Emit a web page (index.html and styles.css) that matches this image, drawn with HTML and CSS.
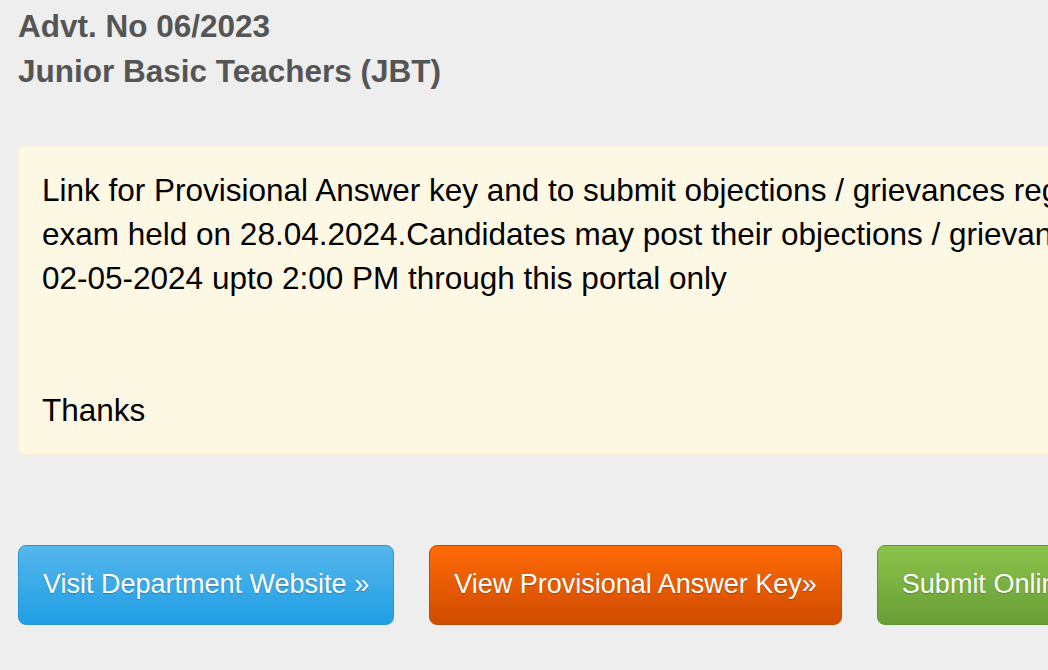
FILE: index.html
```html
<!DOCTYPE html>
<html lang="en">
<head>
<meta charset="utf-8">
<title>Advt. No 06/2023 - Junior Basic Teachers (JBT)</title>
<link rel="stylesheet" href="styles.css">
</head>
<body>
<div class="page">
  <div class="titles">
    <div class="title">Advt. No 06/2023</div>
    <div class="title">Junior Basic Teachers (JBT)</div>
  </div>
  <div class="notice">
    <p class="notice-text">Link for Provisional Answer key and to submit objections / grievances regarding the JBT<br>exam held on 28.04.2024.Candidates may post their objections / grievances till<br>02-05-2024 upto 2:00 PM through this portal only<br><br><br>Thanks</p>
  </div>
  <div class="actions">
    <a class="btn btn-blue" href="#">Visit Department Website &raquo;</a>
    <a class="btn btn-orange" href="#">View Provisional Answer Key&raquo;</a>
    <a class="btn btn-green" href="#">Submit Online Objections &raquo;</a>
  </div>
</div>
</body>
</html>
```

FILE: styles.css
```css
html, body {
  margin: 0;
  padding: 0;
}
body {
  background: #eeeeee;
  font-family: "Liberation Sans", Arial, sans-serif;
  overflow: hidden;
  width: 1048px;
  height: 670px;
}
.page {
  padding: 4px 0 0 18px;
}
.titles {
  margin-bottom: 51px;
}
.title {
  font-size: 31.5px;
  line-height: 45px;
  font-weight: bold;
  color: #555555;
  white-space: nowrap;
}
.notice {
  width: 1300px;
  box-sizing: border-box;
  background: #fcf8e3;
  border: 1px solid #faefd6;
  border-radius: 6px;
  padding: 22px 23px 22px 23px;
}
.notice-text {
  margin: 0;
  font-size: 31.5px;
  line-height: 44px;
  color: #000000;
  white-space: nowrap;
}
.actions {
  margin-top: 90px;
  display: flex;
  gap: 35px;
}
.btn {
  flex-shrink: 0;
  display: block;
  font-size: 27px;
  line-height: 36px;
  padding: 20px 24px 22px 24px;
  border: 1px solid transparent;
  border-radius: 8px;
  color: #ffffff;
  text-decoration: none;
  white-space: nowrap;
  text-shadow: 0 1px 1px rgba(0, 0, 0, 0.25);
}
.btn-blue {
  background: linear-gradient(to bottom, #56b6ec 0%, #1f9fe4 100%);
  border-color: #2596d8;
}
.btn-orange {
  background: linear-gradient(to bottom, #ff6a06 0%, #cf4c00 100%);
  border-color: #c44800;
}
.btn-green {
  background: linear-gradient(to bottom, #8cc34b 0%, #689e36 100%);
  border-color: #609636;
}
```
